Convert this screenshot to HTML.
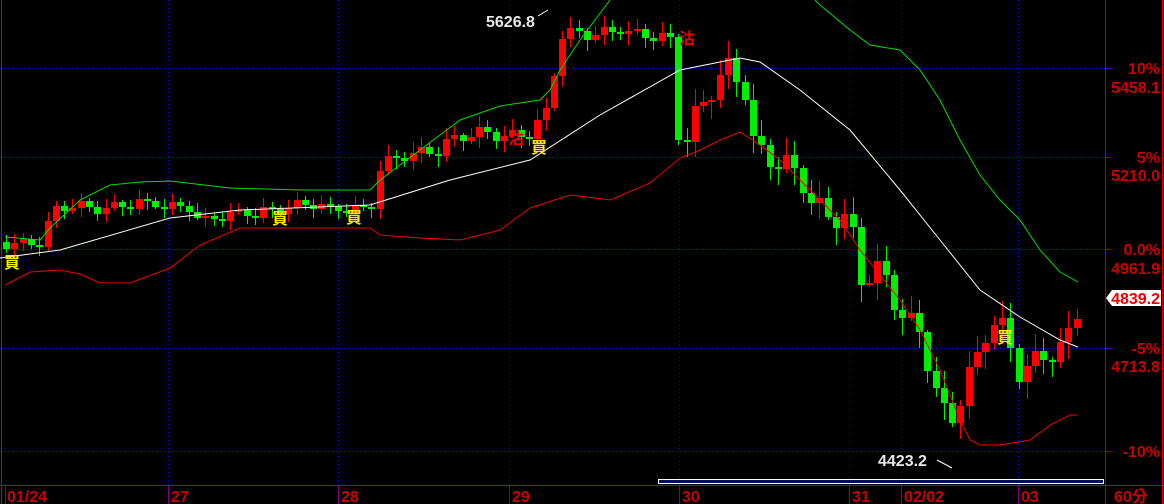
<!DOCTYPE html>
<html><head><meta charset="utf-8"><style>
html,body{margin:0;padding:0;background:#000;width:1164px;height:504px;overflow:hidden}
svg{display:block}
text{font-family:"Liberation Sans","Noto Sans CJK TC",sans-serif;font-weight:bold}
</style></head><body>
<svg id="s" width="1164" height="504" xmlns="http://www.w3.org/2000/svg">
<rect width="1164" height="504" fill="#000"/>
<g stroke="#0000ee" stroke-width="1" stroke-dasharray="1,3">
<line x1="0" y1="68.5" x2="1105" y2="68.5"/>
<line x1="0" y1="157.5" x2="1105" y2="157.5"/>
<line x1="0" y1="348.5" x2="1105" y2="348.5"/>
<line x1="0" y1="451.5" x2="1105" y2="451.5"/>
<line x1="5.5" y1="0" x2="5.5" y2="485"/>
<line x1="168.5" y1="0" x2="168.5" y2="485"/>
<line x1="338.5" y1="0" x2="338.5" y2="485"/>
<line x1="509.5" y1="0" x2="509.5" y2="485"/>
<line x1="679.5" y1="0" x2="679.5" y2="485"/>
<line x1="849.5" y1="0" x2="849.5" y2="485"/>
<line x1="901.5" y1="0" x2="901.5" y2="485"/>
<line x1="1018.5" y1="0" x2="1018.5" y2="485"/>
</g>
<line x1="0" y1="249.5" x2="1105" y2="249.5" stroke="#0000ee" stroke-dasharray="2,1"/>
<line x1="1.5" y1="0" x2="1.5" y2="504" stroke="#d00"/>
<line x1="1162.5" y1="0" x2="1162.5" y2="504" stroke="#d00"/>
<line x1="1105.5" y1="0" x2="1105.5" y2="504" stroke="#800080"/>
<line x1="0" y1="485.5" x2="1164" y2="485.5" stroke="#800080"/>
<g stroke="#800080">
<line x1="1105" y1="68.5" x2="1111" y2="68.5"/><line x1="1105" y1="157.5" x2="1111" y2="157.5"/>
<line x1="1105" y1="249.5" x2="1111" y2="249.5"/><line x1="1105" y1="348.5" x2="1111" y2="348.5"/>
<line x1="1105" y1="451.5" x2="1111" y2="451.5"/>
<line x1="168.5" y1="485" x2="168.5" y2="504"/><line x1="338.5" y1="485" x2="338.5" y2="504"/>
<line x1="509.5" y1="485" x2="509.5" y2="504"/><line x1="679.5" y1="485" x2="679.5" y2="504"/>
<line x1="849.5" y1="485" x2="849.5" y2="504"/><line x1="901.5" y1="485" x2="901.5" y2="504"/>
<line x1="1018.5" y1="485" x2="1018.5" y2="504"/><line x1="5.5" y1="485" x2="5.5" y2="504"/>
</g>
<rect x="658.5" y="479.5" width="445" height="4" fill="#001060" stroke="#fff"/>
<g id="c"></g>
<polyline fill="none" stroke="#fff" stroke-width="1" points="0,258 60,250 170,218 240,210 370,205 450,180 530,160 600,115 680,70 740,58 760,62 800,90 850,130 900,190 940,240 980,290 1020,317 1060,340 1078,347"/>
<polyline fill="none" stroke="#00dd00" stroke-width="1" points="5,237 40,240 50,228 80,200 110,185 140,182 170,181 230,188 300,190 370,190 380,180 420,150 460,120 500,106 540,100 550,90 560,70 580,40 610,0"/>
<polyline fill="none" stroke="#00dd00" stroke-width="1" points="815,0 820,5 850,30 870,45 900,50 920,70 940,100 960,140 980,175 1000,200 1020,220 1040,250 1060,272 1078,282"/>
<polyline fill="none" stroke="#ee0000" stroke-width="1" points="5,285 30,272 60,270 80,274 100,283 130,283 170,268 200,245 240,228 370,228 380,235 420,238 460,240 500,230 530,208 570,195 610,200 650,183 680,158 700,150 720,140 740,132 760,145 780,160 810,190 840,220 860,250 880,275 900,300 920,330 940,370 960,420 970,440 980,445 1000,445 1030,440 1050,425 1070,415 1078,415"/>
<polyline fill="none" stroke="#fff" points="538,16 548,10"/>
<polyline fill="none" stroke="#fff" points="937,460 952,468"/>
<text x="486" y="27" fill="#e8e8e8" font-size="16">5626.8</text>
<text x="878" y="466" fill="#e8e8e8" font-size="16">4423.2</text>
<g font-size="16" fill="#ffee00">
<text x="4" y="268">買</text><text x="272" y="224">買</text><text x="346" y="223">買</text><text x="531" y="153">買</text><text x="997" y="343">買</text>
</g>
<g font-size="16" fill="#ee0000">
<text x="508" y="144">沽</text><text x="679" y="44">沽</text>
</g>
<g font-size="16" fill="#cc0000" text-anchor="end">
<text x="1160" y="74">10%</text><text x="1160" y="93">5458.1</text>
<text x="1160" y="163">5%</text><text x="1160" y="181">5210.0</text>
<text x="1160" y="255">0.0%</text><text x="1160" y="274">4961.9</text>
<text x="1160" y="354">-5%</text><text x="1160" y="372">4713.8</text>
<text x="1160" y="457">-10%</text>
</g>
<polygon points="1106,298 1112,290 1161,290 1161,306 1112,306" fill="#fff"/>
<text x="1160" y="304" fill="#ee0000" font-size="16" text-anchor="end">4839.2</text>
<g font-size="16" fill="#cc0000">
<text x="7" y="502">01/24</text><text x="171" y="502">27</text><text x="341" y="502">28</text>
<text x="512" y="502">29</text><text x="682" y="502">30</text><text x="852" y="502">31</text>
<text x="904" y="502">02/02</text><text x="1021" y="502">03</text><text x="1114" y="502">60分</text>
</g>
</svg>
<script>
(function(){
var NS="http://www.w3.org/2000/svg";
var K=[[6,242],[40,240],[55,212],[80,206],[190,204],[200,222],[240,215],[260,208],[370,206],[378,172],[400,158],[450,140],[500,134],[530,130],[545,118],[552,90],[558,40],[580,32],[620,28],[630,38],[672,38],[680,155],[690,120],[710,95],[730,72],[745,90],[752,138],[780,160],[800,180],[810,210],[850,215],[862,280],[882,275],[900,320],[920,325],[940,405],[955,420],[965,390],[975,370],[990,320],[1005,325],[1020,370],[1040,360],[1065,355],[1072,318],[1080,300]];
function f(x){for(var i=1;i<K.length;i++){if(x<=K[i][0]){var a=K[i-1],b=K[i];return a[1]+(b[1]-a[1])*(x-a[0])/(b[0]-a[0]);}}return K[K.length-1][1];}
function el(n,a){var e=document.createElementNS(NS,n);for(var k in a)e.setAttribute(k,String(a[k]));return e;}
var g=document.getElementById('c'),prev=242,i=0;
for(var x=6;x<=1080;x+=8.3){i++;
var amp=x>680?2.2:(x>370?1.3:1);
var c=f(x)+(Math.sin(i*1.7)*5+Math.sin(i*0.63)*3)*amp;
var o=prev;if(Math.abs(c-o)<2)c=o+2;
var top=Math.round(Math.min(o,c)),bot=Math.round(Math.max(o,c));
if(bot-top<2)bot=top+2;
var col=c<o?'#ff0000':'#00ee00';
var wt=Math.round(top-2-Math.abs(Math.sin(i*2.3))*7*amp),wb=Math.round(bot+2+Math.abs(Math.cos(i*1.9))*7*amp);
var rx=Math.round(x);
g.appendChild(el('rect',{x:rx,y:wt,width:1,height:wb-wt,fill:col}));
g.appendChild(el('rect',{x:rx-3,y:top,width:7,height:bot-top,fill:col}));
prev=c;}
})();
</script>
</body></html>
